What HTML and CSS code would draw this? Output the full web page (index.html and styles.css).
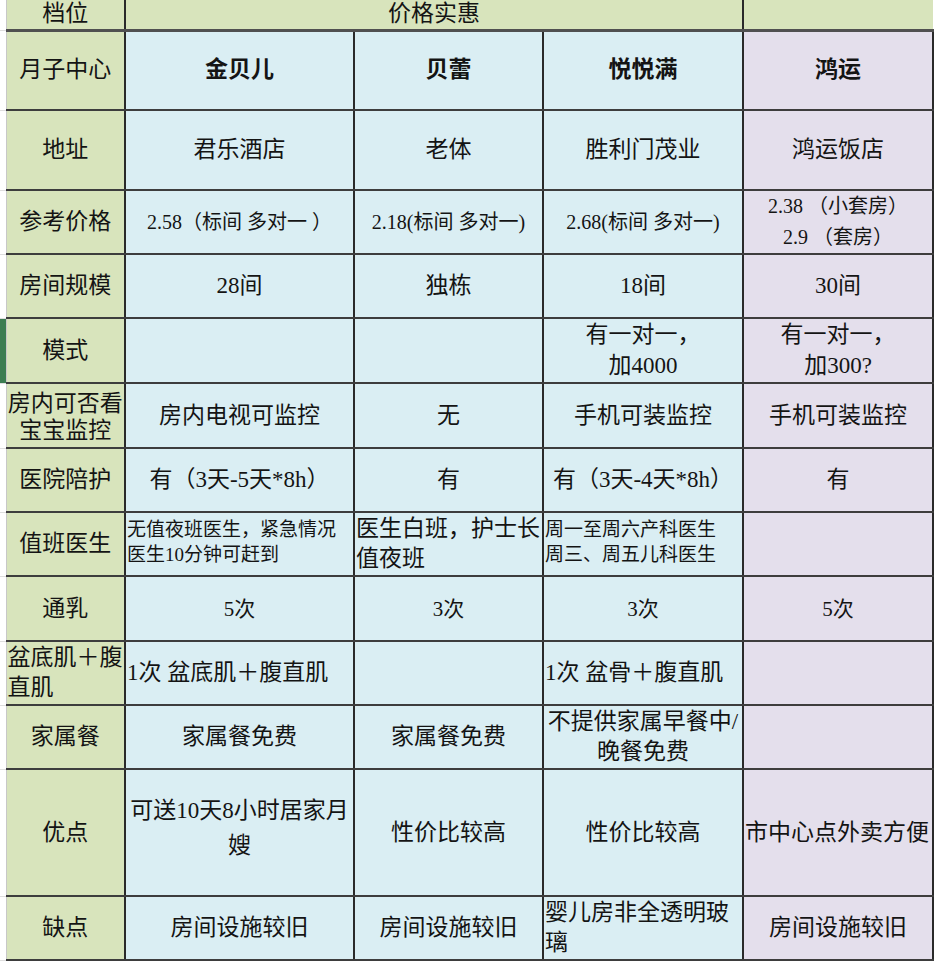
FILE: index.html
```html
<!DOCTYPE html>
<html lang="zh-CN">
<head>
<meta charset="utf-8">
<title>月子中心对比</title>
<link rel="stylesheet" href="styles.css">
</head>
<body>
<table class="sheet">
  <colgroup>
    <col class="c-g"><col class="c-1"><col class="c-2"><col class="c-3"><col class="c-4"><col class="c-5">
  </colgroup>
  <tr class="r-head">
    <td class="g"></td>
    <td class="hd">档位</td>
    <td class="hd" colspan="3">价格实惠</td>
    <td class="hd last"></td>
  </tr>
  <tr class="r-80">
    <td class="g"></td>
    <td class="lb">月子中心</td>
    <td class="b name">金贝儿</td>
    <td class="b name">贝蕾</td>
    <td class="b name">悦悦满</td>
    <td class="p name">鸿运</td>
  </tr>
  <tr class="r-80">
    <td class="g"></td>
    <td class="lb">地址</td>
    <td class="b">君乐酒店</td>
    <td class="b">老体</td>
    <td class="b">胜利门茂业</td>
    <td class="p">鸿运饭店</td>
  </tr>
  <tr class="r-64">
    <td class="g"></td>
    <td class="lb">参考价格</td>
    <td class="b sm">2.58（标间 多对一 ）</td>
    <td class="b sm">2.18(标间 多对一)</td>
    <td class="b sm">2.68(标间 多对一)</td>
    <td class="p sm two">2.38 （小套房）<br>2.9 （套房）</td>
  </tr>
  <tr class="r-64">
    <td class="g"></td>
    <td class="lb">房间规模</td>
    <td class="b">28间</td>
    <td class="b">独栋</td>
    <td class="b">18间</td>
    <td class="p">30间</td>
  </tr>
  <tr class="r-65">
    <td class="g sel"></td>
    <td class="lb">模式</td>
    <td class="b"></td>
    <td class="b"></td>
    <td class="b two top">有一对一，<br>加4000</td>
    <td class="p two top">有一对一，<br>加300?</td>
  </tr>
  <tr class="r-65">
    <td class="g"></td>
    <td class="lb two tight">房内可否看<br>宝宝监控</td>
    <td class="b">房内电视可监控</td>
    <td class="b">无</td>
    <td class="b">手机可装监控</td>
    <td class="p">手机可装监控</td>
  </tr>
  <tr class="r-64">
    <td class="g"></td>
    <td class="lb">医院陪护</td>
    <td class="b">有（3天-5天*8h）</td>
    <td class="b">有</td>
    <td class="b">有（3天-4天*8h）</td>
    <td class="p">有</td>
  </tr>
  <tr class="r-64">
    <td class="g"></td>
    <td class="lb">值班医生</td>
    <td class="b xs left">无值夜班医生，紧急情况<br>医生10分钟可赶到</td>
    <td class="b two left">医生白班，护士长<br>值夜班</td>
    <td class="b xs left">周一至周六产科医生<br>周三、周五儿科医生</td>
    <td class="p"></td>
  </tr>
  <tr class="r-65">
    <td class="g"></td>
    <td class="lb">通乳</td>
    <td class="b num">5次</td>
    <td class="b num">3次</td>
    <td class="b num">3次</td>
    <td class="p num">5次</td>
  </tr>
  <tr class="r-64">
    <td class="g"></td>
    <td class="lb two left">盆底肌＋腹<br>直肌</td>
    <td class="b left">1次 盆底肌＋腹直肌</td>
    <td class="b"></td>
    <td class="b left">1次 盆骨＋腹直肌</td>
    <td class="p"></td>
  </tr>
  <tr class="r-64">
    <td class="g"></td>
    <td class="lb">家属餐</td>
    <td class="b">家属餐免费</td>
    <td class="b">家属餐免费</td>
    <td class="b two">不提供家属早餐中/<br>晚餐免费</td>
    <td class="p"></td>
  </tr>
  <tr class="r-127">
    <td class="g"></td>
    <td class="lb">优点</td>
    <td class="b two wide">可送10天8小时居家月<br>嫂</td>
    <td class="b">性价比较高</td>
    <td class="b">性价比较高</td>
    <td class="p left">市中心点外卖方便</td>
  </tr>
  <tr class="r-64">
    <td class="g"></td>
    <td class="lb">缺点</td>
    <td class="b">房间设施较旧</td>
    <td class="b">房间设施较旧</td>
    <td class="b two left">婴儿房非全透明玻<br>璃</td>
    <td class="p">房间设施较旧</td>
  </tr>
</table>
</body>
</html>
```

FILE: styles.css
```css
html, body {
  margin: 0;
  padding: 0;
  background: #ffffff;
}

body {
  font-family: "Liberation Serif", "Noto Sans CJK SC", serif;
  color: #141414;
}

.sheet {
  border-collapse: collapse;
  table-layout: fixed;
  width: 933px;
}

.c-g { width: 6px; }
.c-1 { width: 119px; }
.c-2 { width: 229px; }
.c-3 { width: 189px; }
.c-4 { width: 200px; }
.c-5 { width: 190px; }

.r-head { height: 30px; }
.r-80 { height: 80px; }
.r-64 { height: 64px; }
.r-65 { height: 65px; }
.r-127 { height: 127px; }

.sheet td {
  padding: 0 1px;
  text-align: center;
  vertical-align: middle;
  white-space: nowrap;
  overflow: visible;
  font-size: 23px;
  line-height: 28px;
  border-right: 2px solid #2a2a2a;
  border-bottom: 2px solid #3d3d3d;
}

.sheet td.g {
  padding: 0;
  background: #ffffff;
  border-right: 1px solid #c8c8c8;
  border-bottom: 1px solid #dedede;
}

.sheet td.g.sel {
  background: #3c7d52;
}

.sheet td.hd {
  background: #d8e4bc;
  font-size: 23px;
  line-height: 26px;
  padding-bottom: 1px;
  border-bottom: 3px solid #505050;
}

.sheet td.hd.last {
  border-right: none;
}

.sheet td.lb {
  background: #d8e4bc;
}

.sheet td.b {
  background: #daeef3;
}

.sheet td.p {
  background: #e4dfec;
}

.sheet td.name {
  font-weight: bold;
}

.sheet td.sm {
  font-size: 20px;
}

.sheet td.xs {
  font-size: 19px;
  line-height: 25px;
  padding-bottom: 4px;
}

.sheet td.num {
  font-size: 21px;
}

.sheet td.two {
  line-height: 30px;
}

.sheet td.two.tight {
  line-height: 27px;
  padding-top: 3px;
}

.sheet td.two.wide {
  line-height: 35px;
  padding-bottom: 10px;
}

.sheet td.sm.two {
  line-height: 31px;
}

.sheet td.top {
  vertical-align: top;
  padding-top: 0;
  line-height: 31px;
}

.sheet td.left {
  text-align: left;
  padding-left: 1px;
}
```
